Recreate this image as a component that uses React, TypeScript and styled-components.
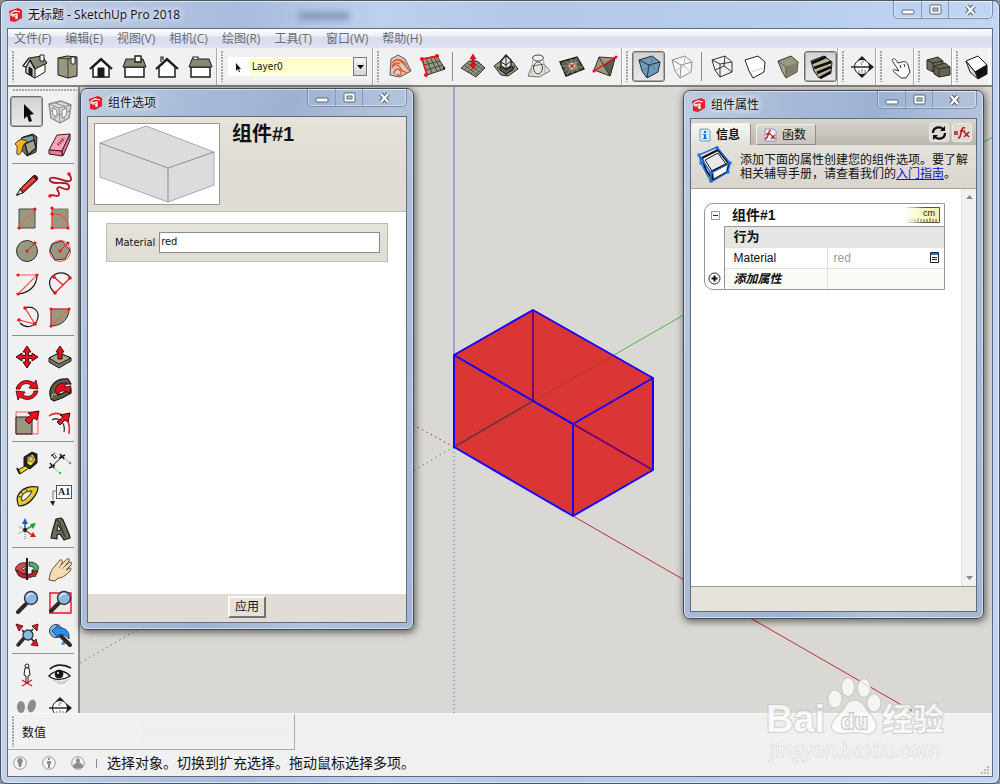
import React from "react";
import styled, { createGlobalStyle, css } from "styled-components";

const ui = `"Open Sans", "Noto Sans CJK SC", sans-serif`;
const tahoma = `"DejaVu Sans Condensed", "DejaVu Sans", "Noto Sans CJK SC", sans-serif`;
const arial = `"Liberation Sans", "Noto Sans CJK SC", sans-serif`;

const GlobalStyle = createGlobalStyle`
  * { box-sizing: border-box; }
  body { margin: 0; background: #8d9197; font-family: ${ui}; font-size: 12px; color: #111; }
  button, input, select { font: inherit; color: inherit; margin: 0; }
  svg { display: block; flex: none; }
`;

/* ---------- window chrome ---------- */

const AppWindow = styled.div`
  position: relative;
  display: flex;
  flex-direction: column;
  height: 100vh;
  padding: 0 6px 6px;
  border: 1px solid #4c5561;
  border-radius: 7px;
  background: linear-gradient(90deg, #c3d2e8 0, #b4c5e1 12%, #a8bbdc 24%, #bcd1ee 38%, #b3c8e6 52%, #b7cdec 75%, #c0d6f3 100%);
  box-shadow: inset 0 0 0 1px #dde8f6;
`;

const TitleBar = styled.header`
  position: relative;
  display: flex;
  align-items: center;
  flex: none;
  height: 27px;
  padding-left: 2px;
`;

const TitleText = styled.h1`
  flex: 1;
  margin: 0 0 0 6px;
  font-size: 12px;
  font-weight: 400;
  line-height: 18px;
  text-shadow: 0 0 6px #fff, 0 0 8px #fff;
`;

const GlassSmudge = styled.span`
  position: absolute;
  left: 292px;
  top: 11px;
  width: 50px;
  height: 8px;
  background: rgba(84, 104, 145, 0.5);
  filter: blur(3px);
`;

const Captions = styled.div`
  display: flex;
  align-self: flex-start;
  height: 18px;
  border: 1px solid #7f8fab;
  border-top: 0;
  border-radius: 0 0 5px 5px;
  box-shadow: inset 0 0 0 1px rgba(255, 255, 255, 0.4);
`;

const CaptionButton = styled.button<{ $wide?: boolean }>`
  display: flex;
  align-items: center;
  justify-content: center;
  width: ${(p) => (p.$wide ? 44 : 27)}px;
  padding: 0;
  border: 0;
  border-left: 1px solid #8c9bb5;
  background: none;
  &:first-child { border-left: 0; }
`;

const Client = styled.div`
  display: flex;
  flex: 1;
  flex-direction: column;
  min-height: 0;
  border: 1px solid #616b7b;
  background: #f0f0f0;
`;

const MenuBar = styled.nav`
  display: flex;
  align-items: center;
  gap: 14px;
  flex: none;
  height: 19px;
  padding: 0 6px;
  background: linear-gradient(#fdfdff 0, #eef0f8 35%, #d7dcee 45%, #dfe3f3 100%);
`;

const MenuItem = styled.button`
  padding: 0;
  border: 0;
  background: none;
  color: #6b6d72;
  line-height: 18px;
  white-space: nowrap;
`;

/* ---------- tool bars ---------- */

const ToolBar = styled.div`
  display: flex;
  flex: none;
  height: 39px;
  overflow: hidden;
  border-bottom: 2px solid #83847f;
  background: #f1f1f1;
`;

const ToolGroup = styled.div<{ $end?: number }>`
  display: flex;
  align-items: center;
  flex: none;
  padding-right: ${(p) => p.$end ?? 0}px;
  border-right: 1px solid #a9a9a9;
  box-shadow: 1px 0 0 #fff;
  &:last-child { border-right: 0; }
`;

const Grip = styled.span<{ $flat?: boolean }>`
  flex: none;
  ${(p) =>
    p.$flat
      ? css`
          width: 64px;
          height: 2px;
          margin: 2px 0 4px 3px;
          background: repeating-linear-gradient(90deg, #a8a8a8 0 2px, transparent 2px 3px);
        `
      : css`
          width: 2px;
          height: 31px;
          margin: 0 4px;
          background: repeating-linear-gradient(#a8a8a8 0 2px, transparent 2px 3px);
        `}
`;

const ToolButton = styled.button<{ $compact?: boolean }>`
  display: flex;
  align-items: center;
  justify-content: center;
  flex: none;
  width: ${(p) => (p.$compact ? 27 : 33)}px;
  height: 33px;
  padding: 0;
  border: 0;
  background: none;
  &[aria-pressed="true"] {
    height: 31px;
    margin: 1px 0;
    border: 1px solid #6f6f6f;
    border-radius: 3px;
    background: linear-gradient(#d2d2d2, #e9e9e9);
    box-shadow: inset 0 0 0 1px #a9a9a9;
  }
`;

const Divider = styled.span<{ $flat?: boolean }>`
  flex: none;
  background: #8e8e8e;
  ${(p) => (p.$flat ? "width: 62px; height: 1px; margin: 2px 2px 4px;" : "width: 1px; height: 29px; margin: 0 3px;")}
`;

const LayerBox = styled.label`
  display: flex;
  align-items: center;
  width: 140px;
  height: 19px;
  margin-left: 1px;
  background: #fff;
`;

const LayerSelect = styled.select`
  flex: 1;
  min-width: 0;
  height: 17px;
  padding: 0 0 0 2px;
  border: 0;
  appearance: none;
  background: #ffffcd;
  font-family: ${tahoma};
  font-size: 10px;
`;

const DropArrow = styled.span`
  display: flex;
  align-items: center;
  justify-content: center;
  width: 14px;
  height: 19px;
  margin: 0 1px;
  border: 1px solid #777;
  background: linear-gradient(#f6f6f6, #d5d5d5);
`;

const Workspace = styled.main`
  display: flex;
  flex: 1 1 0;
  min-height: 0;
`;

const ToolPalette = styled.aside`
  flex: none;
  width: 72px;
  overflow: hidden;
  padding: 0 0 0 2px;
  border-right: 2px solid #8b8c8a;
  background: #f1f1f1;
`;

const PaletteSection = styled.div`
  display: grid;
  grid-template-columns: 33px 33px;
`;

const Viewport = styled.section`
  position: relative;
  flex: 1;
  min-width: 0;
  background: #d9d8d4;
`;

const Scene = styled.svg`
  width: 100%;
  height: 100%;
  overflow: hidden;
`;

/* ---------- bottom bars ---------- */

const ValueRow = styled.div`
  flex: none;
  height: 37px;
  border-top: 1px solid #fafafa;
`;

const ValueBox = styled.label`
  display: flex;
  align-items: center;
  width: 287px;
  height: 36px;
  border-right: 1px solid #ababab;
  border-bottom: 1px solid #ababab;
  background: #f1f1f1;
`;

const ValueInput = styled.input`
  width: 148px;
  height: 14px;
  margin-left: 95px;
  border: 0;
  background: #efefef;
`;

const ValueLabel = styled.span`
  margin-left: 4px;
`;

const StatusBar = styled.footer`
  display: flex;
  align-items: center;
  gap: 15px;
  flex: none;
  height: 26px;
  padding-left: 5px;
  background: #f0f0f0;
`;

const StatusText = styled.p`
  margin: 0;
  padding-left: 10px;
  font-size: 14px;
  line-height: 20px;
`;

const StatusTick = styled.span`
  width: 1px;
  height: 9px;
  margin: 0 -15px 0 -4px;
  background: #8a8a8a;
`;

const Watermark = styled.svg`
  position: absolute;
  right: 46px;
  bottom: 12px;
  pointer-events: none;
`;

const ResizeCorner = styled.svg`
  position: absolute;
  right: 9px;
  bottom: 8px;
`;

/* ---------- floating dialogs ---------- */

const Dialog = styled.section<{ $place: string }>`
  position: absolute;
  ${(p) => p.$place}
  display: flex;
  flex-direction: column;
  padding: 0 6px 6px;
  border: 1px solid #434c58;
  border-radius: 7px;
  background: linear-gradient(100deg, #bfcde1 0, #a8bbd8 25%, #9db2d3 50%, #b3c3dc 75%, #a3b6d3 100%);
  box-shadow: inset 0 0 0 1px #d3deed, 1px 2px 7px 1px rgba(0, 0, 0, 0.5);
`;

const DialogBody = styled(Client)`
  background: #fff;
`;

const OptionsHeader = styled.div`
  display: flex;
  gap: 12px;
  flex: none;
  height: 95px;
  padding: 6px;
  border-bottom: 1px solid #bdb9b5;
  background: linear-gradient(#e5e4d9, #e1dcd6 45%);
`;

const Thumb = styled.div`
  width: 126px;
  height: 82px;
  border: 1px solid #999;
  background: #fff;
`;

const OptionsTitle = styled.h2`
  margin: 0;
  font-family: ${arial};
  font-size: 20px;
  line-height: 22px;
`;

const OptionsContent = styled.div`
  flex: 1;
  padding: 11px 18px;
`;

const Field = styled.label`
  display: flex;
  align-items: center;
  gap: 4px;
  height: 39px;
  padding: 0 7px 0 8px;
  border: 1px solid #bdbdbd;
  background: linear-gradient(#e4e3d9, #e1dcd6);
  font-family: ${tahoma};
  font-size: 11px;
`;

const FieldInput = styled.input`
  flex: 1;
  min-width: 0;
  height: 21px;
  padding: 0 0 3px 1px;
  border: 1px solid #8b8b8b;
  background: #fff;
`;

const OptionsFooter = styled.div`
  display: flex;
  justify-content: center;
  flex: none;
  height: 28px;
  padding-top: 2px;
  background: #e1dcd6;
`;

const ApplyButton = styled.button`
  width: 38px;
  height: 22px;
  padding: 0;
  border: 2px solid;
  border-color: #f8f8f8 #77746f #77746f #f8f8f8;
  background: #e4e2dc;
  font-size: 12px;
  line-height: 16px;
`;

const TabStrip = styled.div`
  display: flex;
  align-items: flex-end;
  gap: 5px;
  flex: none;
  height: 26px;
  padding: 0 4px 0 0;
  background: linear-gradient(#d9d5cf, #bcb7b0);
`;

const Tab = styled.button`
  display: flex;
  align-items: center;
  gap: 5px;
  width: 60px;
  height: 21px;
  padding: 0 0 0 7px;
  border: 1px solid #f1efeb;
  border-right-color: #8f8b85;
  border-bottom: 1px solid #8f8b85;
  border-radius: 3px 3px 0 0;
  background: linear-gradient(#dcd9d3, #c9c5be);
  font-size: 12px;
  line-height: 18px;
  white-space: nowrap;
  &[aria-selected="true"] {
    height: 22px;
    border-bottom: 0;
    background: linear-gradient(#f8f7f4, #e4e1db);
    font-weight: 700;
  }
`;

const TabTools = styled.div`
  display: flex;
  gap: 3px;
  flex: 1;
  justify-content: flex-end;
  padding-bottom: 3px;
`;

const TabTool = styled.button`
  display: flex;
  align-items: center;
  justify-content: center;
  width: 20px;
  height: 19px;
  padding: 0;
  border: 1px solid #eceae5;
  border-radius: 3px;
  background: #dedbd5;
`;

const Hint = styled.div`
  display: flex;
  gap: 7px;
  flex: none;
  height: 44px;
  padding: 1px 0 0 6px;
  border-bottom: 1px solid #a8a49e;
  background: linear-gradient(#e4e1db, #dad6cf);
`;

const HintText = styled.p`
  margin: 0;
  padding-top: 7px;
  font-family: ${arial};
  line-height: 14px;
  white-space: nowrap;
`;

const HintLink = styled.a`
  color: #1212d8;
`;

const Scroller = styled.div`
  display: flex;
  flex: 1;
  min-height: 0;
`;

const ScrollContent = styled.div`
  flex: 1;
  padding: 14px 16px 0 13px;
`;

const ScrollTrack = styled.div`
  display: flex;
  flex-direction: column;
  justify-content: space-between;
  align-items: center;
  width: 15px;
  padding: 6px 0;
  border-left: 1px solid #e2e2e2;
  background: #f1f1f1;
`;

const AttributesFooter = styled.div`
  flex: none;
  height: 25px;
  border-top: 1px solid #999;
  background: #e4e2da;
`;

const AttributeFrame = styled.div`
  overflow: hidden;
  border: 1px solid #979797;
  border-radius: 9px 0 0 9px;
`;

const AttributeTable = styled.table`
  width: 100%;
  border-collapse: collapse;
  table-layout: fixed;
  font-family: ${arial};
  font-size: 12px;
  line-height: 16px;
`;

const Cell = styled.td<{ $line?: boolean; $tint?: string }>`
  height: 21px;
  padding: 0 0 0 ${(p) => (p.$line ? 6 : 9)}px;
  border-top: 1px solid #e0e0e0;
  ${(p) => p.$line && "border-left: 1px solid #e0e0e0;"}
  background: ${(p) => p.$tint ?? "#fff"};
  text-align: left;
  font-weight: 400;
`;

const SectionCell = styled(Cell)`
  border-top: 1px solid #979797;
  font-size: 13px;
  font-weight: 700;
`;

const GutterCell = styled.td`
  padding: 0 0 0 3px;
  border-right: 1px solid #979797;
  vertical-align: bottom;
`;

const NameCell = styled.th`
  height: 22px;
  padding: 0 3px 0 8px;
  text-align: left;
`;

const NameLine = styled.div`
  display: flex;
  align-items: center;
  justify-content: space-between;
  font-size: 14px;
`;

const ToggleCell = styled.td`
  padding: 0 0 0 6px;
`;

const PlainButton = styled.button`
  display: block;
  padding: 0;
  border: 0;
  background: none;
`;

const ValueLine = styled.div`
  display: flex;
  align-items: center;
  justify-content: space-between;
  padding-right: 5px;
  color: #9b9b9b;
`;

const AddButton = styled(PlainButton)`
  font-style: italic;
  font-weight: 700;
  font-size: 12px;
`;

/* ---------- icons ---------- */

const R = "#f2101c";
const K = "#1c1c1c";
const O = "#9a9781";
const D = "#5f5d4e";

const Dots = ({ at, r = 1.6 }: { at: number[][]; r?: number }) => (
  <g fill={R} stroke="none">
    {at.map(([x, y]) => (
      <circle key={`${x}-${y}`} cx={x} cy={y} r={r} />
    ))}
  </g>
);

const icons: Record<string, React.ReactNode> = {
  iso: (
    <g stroke={K} strokeLinejoin="round">
      <path d="M4 12v7l9 5 10-6v-8l-9 4z" fill="#fff" />
      <path d="M13 15v9l-9-5v-7l4-6z" fill="#c9c9c2" />
      <path d="M7 4l13-2 5 7-12 6z" fill="#8a8873" />
      <path d="M7 4L1 12l3 1 4-7 5 9" fill="#fff" strokeWidth="1.3" />
      <path d="M7 13l3 2v7l-3-2z" fill={K} />
      <path d="M18 1h4v6h-4z" fill="#fff" />
    </g>
  ),
  top: (
    <g stroke={K} strokeLinejoin="round">
      <path d="M3 4l9-2 10 1v19l-9 2-10-3z" fill={O} />
      <path d="M13 4v20M3 4l10 1 9-2" fill="none" stroke="#3d3c33" />
      <rect x="16" y="3" width="4" height="7" rx="1" fill="#fff" />
    </g>
  ),
  front: (
    <g stroke={K}>
      <path d="M5 13v10h16V13l-8-7z" fill="#fff" strokeWidth="1.5" />
      <path d="M2 15L13 5l11 10" fill="none" strokeWidth="2.2" />
      <path d="M10 14h6v9h-6z" fill={K} />
    </g>
  ),
  right: (
    <g stroke={K}>
      <path d="M4 13h19v10H4z" fill="#fff" strokeWidth="1.5" />
      <path d="M5 5h17l3 8H2z" fill="#8a8873" />
      <path d="M14 2h6v6h-6z" fill="#fff" strokeWidth="1.4" />
    </g>
  ),
  back: (
    <g stroke={K}>
      <path d="M5 13v10h16V13l-8-7z" fill="#fff" strokeWidth="1.5" />
      <path d="M2 15L13 5l11 10" fill="none" strokeWidth="2.2" />
      <path d="M7 8V3h2v3" fill="#fff" strokeWidth="1.2" />
    </g>
  ),
  left: (
    <g stroke={K}>
      <path d="M4 13h19v10H4z" fill="#fff" strokeWidth="1.5" />
      <path d="M5 5h17l3 8H2z" fill="#8a8873" />
      <path d="M6 5V3h5v2" fill="#fff" strokeWidth="1.2" />
    </g>
  ),
  contours: (
    <g fill="none">
      <path d="M4 5l7-4 7 4 6 12-11 6-10-2z" fill="#d2cec0" stroke="#555" />
      <path
        d="M5 9c4-5 8-3 12 1s3 5 6 7M5 14c3-6 8-2 9 1s5 2 6 5M7 20c0-5 5-7 7-2 1 3-3 5-4 2M8 6c5-2 9 2 11 5M5 12c2-3 5-4 8-2"
        stroke="#ea5a35"
        strokeWidth="1.4"
      />
    </g>
  ),
  scratch: (
    <g fill="none">
      <path d="M2 5l15-3 8 13-18 6z" fill={O} stroke="#333" />
      <path d="M6 4l6 15M10 3l7 14M14 3l7 13M4 11l16-4M6 16l17-5" stroke="#333" strokeWidth=".8" />
      <path d="M7 21L2 5l15-3" stroke={R} strokeWidth="1.5" />
      <Dots at={[[2, 5], [17, 2], [6, 21]]} r={2} />
      <circle cx="24" cy="14" r="1.2" fill={K} />
    </g>
  ),
  smoove: (
    <g fill="none">
      <path d="M1 14l8-7 8 0 8 7-9 9z" fill={O} stroke="#333" />
      <path d="M4 11l14 10M7 9l13 9M10 7l12 8M20 8L8 18M22 10l-11 9M17 7L5 15M24 13L14 22" stroke="#444" strokeWidth=".7" />
      <path d="M13 0l3 5h-2v5h2l-3 5-3-5h2V5h-2z" fill={R} stroke="#8d0008" strokeWidth=".5" />
    </g>
  ),
  stamp: (
    <g stroke="#222" strokeLinejoin="round">
      <path d="M1 12l9-7 9 2 6 8-10 7-7-1z" fill={O} />
      <path d="M8 7l5-6 5 5v6l-5 3-5-3z" fill="#e5e5e0" strokeWidth="1.4" />
      <path d="M7 12l6 4 7-4v4l-7 4-6-4zM4 13l10 8M22 13l-9 7" fill={D} />
      <path d="M13 2v14M8 8l5 3 5-4" fill="none" />
    </g>
  ),
  drape: (
    <g stroke="#6f6f66" fill="none">
      <path d="M6 12l12-2 6 7-11 6-11-1z" fill="#e6e6de" />
      <ellipse cx="12" cy="4" rx="5.5" ry="3" stroke="#444" />
      <path d="M7 4c0 7-4 13 0 17M17 4c0 5 4 9 1 15" stroke="#aaa" />
      <ellipse cx="12" cy="14" rx="4.5" ry="6" stroke="#444" />
    </g>
  ),
  detail: (
    <g fill="none">
      <path d="M1 8l17-5 7 12-18 7z" fill={D} stroke={K} strokeWidth="1.4" />
      <path d="M6 7l14 11M18 4L8 21M2 12l22 1M12 5l2 15M4 18L20 7" stroke="#a5a28d" strokeWidth=".7" />
      <path d="M9 9l8-1 2 7-8 2z" fill="#8e8b77" />
      <path d="M10 12h6M13 9v6" stroke="#fff" strokeWidth="1.4" />
      <circle cx="13" cy="12" r="1.8" fill={R} />
    </g>
  ),
  flip: (
    <g>
      <path d="M7 3l16 1-5 18L2 16z" fill={O} stroke="#333" />
      <path d="M23 4l-5 18-6-10z" fill={D} stroke="#333" />
      <path d="M7 3l5 9" stroke="#333" />
      <path d="M2 17L24 3" stroke={R} strokeWidth="1.4" />
      <Dots at={[[2, 17], [24, 3]]} r={1.6} />
    </g>
  ),
  xray: (
    <g stroke="#1f2e3a" strokeLinejoin="round">
      <path d="M3 6l13-4 8 6-2 10-11 6-5-7z" fill="#6f9bb9" />
      <path d="M3 6l10 5 11-3M13 11l-2 13" fill="none" />
      <path d="M16 2v10l6 6M16 12L6 17" fill="none" stroke="#4f7690" strokeWidth=".8" />
    </g>
  ),
  backedges: (
    <g stroke="#8d8d8d" strokeLinejoin="round" fill="#f8f8f8">
      <path d="M3 6l13-4 7 6-1 10-11 6-5-7z" />
      <path d="M3 6l9 5 11-3M12 11l-1 13" fill="none" />
      <path d="M16 2l-1 10 7 6M15 12l-9 5" fill="none" stroke="#bbb" />
    </g>
  ),
  wire: (
    <g stroke="#333" fill="none" strokeLinejoin="round">
      <path d="M3 6l13-4 7 6v10l-12 5-5-7zM3 6l8 4 12-2M11 10v13M16 2l-1 10 8 6M15 12l-9 4" />
    </g>
  ),
  hidden: (
    <g stroke="#222" strokeLinejoin="round">
      <path d="M3 6l13-4 7 6-1 10-11 6-4-7z" fill="#fff" />
      <path d="M9 18l12-4" stroke="#ccc" />
    </g>
  ),
  shaded: (
    <g stroke="#3c3b33" strokeLinejoin="round">
      <path d="M3 7l13-5 7 6-1 10-11 6-4-7z" fill={O} />
      <path d="M11 13l12-5-1 10-11 6z" fill="#827f6b" stroke="none" />
      <path d="M3 7l8 6v11l-4-7z" fill="#a5a28b" strokeWidth=".6" />
    </g>
  ),
  textured: (
    <g stroke={K} strokeLinejoin="round">
      <path d="M3 7l13-5 8 6-1 10-12 6-5-7z" fill="#b8b49a" />
      <path d="M4 9l14-6M6 14l17-6M9 19l14-6M12 24l11-6" stroke="#0c0c0c" strokeWidth="2.8" />
    </g>
  ),
  section: (
    <g fill="none" stroke={K}>
      <circle cx="13" cy="13" r="7.5" fill="#fff" />
      <path d="M2 13h22" strokeWidth="1.4" />
      <path d="M13 2l4 4H9zM25 13l-5-4v8zM13 24l-4-4h8z" fill={K} stroke="none" />
      <path d="M15 8c-3-1-4 2-2 3M10 16v3M13 15v4M16 16v3" stroke="#777" />
    </g>
  ),
  hand: (
    <g>
      <path
        d="M6 5c2-1 3 1 5 4l4-1c3-1 5 0 6 3l2 7-4 6h-5l-7-6c-2-2 0-3 2-2l3 1L6 8c-1-1-1-2 0-3z"
        fill="#fff"
        stroke="#333"
      />
      <path d="M13 11l1 3M17 10l1 3" stroke="#333" />
    </g>
  ),
  solids: (
    <g stroke="#2c2b25" strokeLinejoin="round">
      <path d="M2 6l11-3 5 4v9l-10 2-6-3z" fill="#6f6c5a" />
      <path d="M9 12l11-3 5 4v8l-11 2-5-3z" fill="#67644f" />
      <path d="M2 6l6 3v9M8 9l10-2M9 12l5 3v8M14 15l11-2" fill="none" />
    </g>
  ),
  halfbox: (
    <g stroke={K} strokeLinejoin="round">
      <path d="M3 7l12-5 9 9-12 7z" fill="#fff" />
      <path d="M12 18l12-7v9l-9 5z" fill="#111" />
      <path d="M3 7l9 11 3 7-8-7z" fill="#ddd" />
    </g>
  ),
  arrow: <path d="M10 5v15l3-3 2 6 3-1-2-6 4-1z" fill="#0b0b0b" />,
  component: (
    <g fill="none" stroke="#8b8b8b" strokeLinejoin="round">
      <path d="M2 5l12-3 10 4-2 13-9 5-9-5z" fill="#dcdcdc" strokeWidth="1.4" />
      <path d="M2 5l10 4 12-3M12 9l1 15M4 12l9 4 10-4M7 7l1 14M18 7l-1 14M8 4l9 3" />
      <path d="M15 11l5-2-1 8-4 2zM5 9l5 2v7l-4-2z" fill="#f5f5f5" />
    </g>
  ),
  paint: (
    <g stroke={K} strokeLinejoin="round">
      <path d="M9 5l10-3 4 3-1 15-9 4-8-9z" fill="#6f6c59" />
      <path d="M7 6l12-3 1 5-9 4z" fill="#7fa0a4" />
      <path d="M11 12l9-4 2 8-8 7z" fill="#a8a48c" strokeWidth="1.3" />
      <path d="M1 12c4-6 9-5 13-2-4 1-5 3-6 8-1 4-4 6-5 4-1-3 2-7-2-10z" fill="#f0b51e" strokeWidth=".8" />
    </g>
  ),
  eraser: (
    <g stroke="#3d1c25" strokeLinejoin="round">
      <path d="M10 3l13-1-8 17L2 18z" fill="#f6a6b6" />
      <path d="M23 2v6l-7 16-1-5zM2 18v4l13 2v-5z" fill="#e57f96" />
      <path d="M11 13l6-7" stroke="#7d3145" strokeWidth="3" strokeDasharray="1.2 1" />
    </g>
  ),
  pencil: (
    <g strokeLinejoin="round">
      <path d="M6 17L19 4l4 4-14 13z" fill="#c9281e" stroke={K} />
      <path d="M19 4c2-2 6 1 4 4z" fill="#5c1511" stroke={K} />
      <path d="M3 23l3-6 3 4z" fill="#e8d7ac" stroke={K} />
      <path d="M2 24l1-3 2 2z" fill={K} />
      <path d="M9 17L20 7" stroke="#ef6a5b" strokeWidth="1.2" />
    </g>
  ),
  freehand: (
    <g fill="none">
      <path
        d="M22 2c4 6 2 8-3 7S7 4 4 6s0 5 5 5 12-1 13 3-3 4-7 2-6 0-4 3 1 5-1 5-4-2-8 0"
        stroke="#b31323"
        strokeWidth="1.8"
      />
      <Dots at={[[22, 2], [3, 24]]} r={1.8} />
    </g>
  ),
  rect: (
    <g>
      <path d="M5 4h16v19H5z" fill={O} stroke="#4b4a40" />
      <path d="M5 23L21 4" stroke="#ff5a5a" />
      <Dots at={[[5, 23], [21, 4]]} />
    </g>
  ),
  rotrect: (
    <g fill="none">
      <path d="M5 4h16v19H5z" fill={O} stroke="#77756a" />
      <path d="M5 4v19h16v-4C19 12 13 8 5 9" stroke="#ff4d4d" strokeWidth="1.2" />
      <Dots at={[[5, 3], [5, 9], [5, 23], [21, 23]]} />
    </g>
  ),
  circle: (
    <g>
      <circle cx="13" cy="13" r="10.5" fill={O} stroke="#33322b" />
      <path d="M13 13l8-8" stroke={R} />
      <Dots at={[[13, 13], [21, 5]]} />
    </g>
  ),
  polygon: (
    <g>
      <circle cx="13" cy="13" r="10.5" fill="#f6d9d5" stroke="#ff4d4d" />
      <path d="M15 3l8 9-5 9-10 1-5-9 2-7z" fill={O} stroke="#33322b" />
      <path d="M13 13l7-7" stroke={R} />
      <Dots at={[[13, 13], [21, 5]]} />
    </g>
  ),
  arc: (
    <g fill="none">
      <path d="M23 4c0 11-8 18-19 19" stroke={K} strokeWidth="1.2" />
      <path d="M4 4h19L4 23" stroke="#ff5a5a" strokeWidth="1.2" />
      <Dots at={[[4, 4], [23, 4], [4, 23]]} />
    </g>
  ),
  arc2: (
    <g fill="none">
      <path d="M8 22C1 16 1 8 7 4s14-2 16 3" stroke={K} strokeWidth="1.2" />
      <path d="M8 22L23 7M7 6l9 8" stroke={R} strokeWidth="1.2" />
      <Dots at={[[8, 22], [23, 7], [7, 6]]} r={1.8} />
    </g>
  ),
  arc3: (
    <g fill="none">
      <path d="M11 4c8-3 14 3 13 9-1 9-11 13-18 6" stroke={K} strokeWidth="1.2" />
      <path d="M11 4l10 16-16-4" stroke="#f33" strokeWidth="1.2" />
      <Dots at={[[11, 4], [21, 20], [5, 16]]} r={1.8} />
    </g>
  ),
  pie: (
    <g>
      <path d="M4 5h18c0 10-7 17-18 17z" fill={O} stroke="#33322b" />
      <path d="M22 5L4 22V5z" fill="none" stroke="#ff4d4d" />
      <Dots at={[[4, 5], [22, 5], [4, 22]]} />
    </g>
  ),
  move: (
    <path
      d="M13 2l4 6h-2.500v3.500H18V9l6 4-6 4v-2.500h-3.500V18H17l-4 6-4-6h2.500v-3.500H8V17l-6-4 6-4v2.500h3.500V8H9z"
      fill={R}
      stroke="#3a0508"
    />
  ),
  pushpull: (
    <g strokeLinejoin="round">
      <path d="M2 14l10-5 12 5v3l-12 7-10-6z" fill="#77745f" stroke={K} />
      <path d="M2 14l10-5 12 5-12 6z" fill="#aaa78f" stroke={K} />
      <path d="M13 2l4 6h-2v7h-4V8H9z" fill={R} stroke="#3a0508" />
    </g>
  ),
  rotate: (
    <g fill={R} stroke="#3a0508" strokeWidth=".8" strokeLinejoin="round">
      <path d="M2 12C4 4 13 1 20 6l2-3 2 9-9-1 2-3C12 5 7 7 6 12z" />
      <path d="M24 14c-2 8-11 11-18 6l-2 3-2-9 9 1-2 3c5 3 10 1 11-4z" />
    </g>
  ),
  followme: (
    <g strokeLinejoin="round">
      <path d="M4 22C0 10 8 1 21 2l3 5C15 6 9 11 10 18l4-1 10-5v4l-9 5-8 3z" fill="#5e5b4a" stroke={K} strokeWidth="1.3" />
      <path d="M9 16C7 9 12 5 20 6l-3 4 7-1-1 7-6-2c-4 0-5 1-5 4z" fill="#d9121c" stroke="#3a0508" strokeWidth=".8" />
      <path d="M4 21l2-4 4 1" fill="none" stroke="#bdb9a0" />
    </g>
  ),
  scale: (
    <g>
      <path d="M2 2h22v22H2z" fill="#fbeaea" stroke="#ff5a5a" />
      <path d="M2 7h16v17H2z" fill={O} stroke={K} />
      <path d="M25 1l-2 9-3-2-5 6-4-4 6-5-3-2z" fill={R} stroke="#3a0508" />
    </g>
  ),
  offset: (
    <g fill="none">
      <path d="M2 6C10-1 25 6 22 24" stroke="#f22" strokeWidth="1.6" />
      <path d="M5 10c6-4 14 3 12 12" stroke="#333" strokeWidth="1.3" />
      <path d="M23 3l-2 9-3-2-5 5-3-3 6-5-3-2z" fill={R} stroke="#3a0508" />
    </g>
  ),
  tape: (
    <g strokeLinejoin="round">
      <path d="M10 7l8-5 5 2v9l-7 6-6-3z" fill="#26251d" stroke={K} />
      <path d="M13 7l6-3 3 6-5 6-4-2z" fill="#ffe11a" stroke={K} />
      <circle cx="17" cy="9" r="2.5" fill="#c7c7c7" stroke={K} strokeWidth=".6" />
      <path d="M4 20l7-4 4 2-9 6z" fill="#f2d414" stroke={K} />
      <path d="M3 18l3 6" stroke={K} strokeWidth="2" />
    </g>
  ),
  dimension: (
    <g stroke={K} fill="none">
      <path d="M15 7L5 16" />
      <path d="M15 6l8 7M5 16l8 7" stroke="#888" strokeDasharray="2 1" />
      <path d="M13 4l4 5M12 8l6-3M3 13l4 5M2 18l6-3" strokeWidth="1.5" />
      <path d="M4 6l4-3M5 4l2 4c2 1 3-1 1-3" />
      <g fill="#38c838" stroke="none">
        <circle cx="23" cy="13" r="1.3" />
        <circle cx="13" cy="23" r="1.3" />
      </g>
    </g>
  ),
  protractor: (
    <g strokeLinejoin="round">
      <path d="M5 23C-1 12 9 2 24 4c0 6-8 19-19 19z" fill="#e5c72f" stroke={K} strokeWidth="1.2" />
      <path d="M8 18c-2-6 3-10 10-10-2 4-6 9-10 10z" fill="#f1f1f1" stroke={K} />
      <path d="M4 13l3 1M7 9l2 2M12 6l1 2" stroke={K} strokeWidth=".8" />
    </g>
  ),
  text: (
    <g>
      <path d="M9 8H6v9" fill="none" stroke="#777" />
      <path d="M3 18h5l-2 5z" fill={K} />
      <rect x="9.5" y="2.5" width="15" height="13" fill="#fff" stroke="#555" />
      <text x="11" y="12" fontFamily="Liberation Serif, serif" fontSize="10" fontWeight="700" fill="#222">
        A1
      </text>
    </g>
  ),
  axes: (
    <g strokeWidth="1.5">
      <path d="M11 14V6" stroke="#1f5da8" />
      <path d="M11 2l3 6H8z" fill="#1f5da8" />
      <path d="M11 14l7-4" stroke="#1f9d3c" />
      <path d="M22 7l-3 6-3-5z" fill="#1f9d3c" />
      <path d="M11 14l7 5" stroke="#d42020" />
      <path d="M22 21h-6l3-5z" fill="#d42020" />
      <path d="M11 14l-7-4" stroke="#e08080" strokeDasharray="1 1" />
      <path d="M11 14l-7 4" stroke="#7dc37d" strokeDasharray="1 1" />
      <path d="M11 14v9" stroke="#7c9ccc" strokeDasharray="1 1" />
      <circle cx="11" cy="14" r="2" fill={K} />
    </g>
  ),
  text3d: (
    <g stroke={K} strokeLinejoin="round">
      <path d="M9 3l5-1 2 2 6 14 1 4-6 2-4-6-3 1v4l-6-1 1-5z" fill="#6c6a5b" strokeWidth="1.2" />
      <path d="M11 9l3 5-4 1z" fill="#f1f1f1" />
      <path d="M9 3l3 3 6 15" fill="none" stroke="#3b3a31" strokeWidth="1.5" />
    </g>
  ),
  orbit: (
    <g strokeLinejoin="round">
      <path d="M11 18c-7 1-11-3-9-7s8-5 10-4v4c-4 0-5 2-3 3l3-2v6z" fill="#cf4a4a" stroke={K} strokeWidth=".8" />
      <path d="M15 6c7 0 11 4 9 8l-6 4v-4c3-1 3-3-3-4z" fill="#4fae6b" stroke={K} strokeWidth=".8" />
      <path d="M2 14l3 1c4 4 9 4 14 2l-1-2h6l-3 6-1-1c-6 3-12 3-16-1z" fill="#c3202b" stroke={K} strokeWidth=".8" />
      <path d="M13 2v22" stroke={K} strokeWidth="2" />
    </g>
  ),
  pan: (
    <g>
      <path
        d="M2 24c1-8 3-11 6-14l5-6c2-1 3 1 2 3l-1 2 6-6c2-1 3 0 2 2l-4 5 5-4c2 0 2 1 1 3l-5 5 4-2c2 0 1 2-1 4-4 4-7 6-11 6l-3 3z"
        fill="#f4dcb8"
        stroke="#6b5030"
      />
      <path d="M14 9l-2 3M18 10l-3 3" stroke="#a5845a" />
    </g>
  ),
  zoom: (
    <g>
      <path d="M4 23l8-8" stroke="#2b2b2b" strokeWidth="4" strokeLinecap="round" />
      <circle cx="17" cy="9" r="6.5" fill="#8fb8dd" stroke="#2b3a48" strokeWidth="1.4" />
      <path d="M13 8c1-3 4-4 6-3" stroke="#dcebf8" fill="none" strokeWidth="1.5" />
    </g>
  ),
  zoomwin: (
    <g>
      <path d="M3 4h21v20H3z" fill="#f8e6e6" stroke={R} strokeWidth="1.4" />
      <path d="M4 22l8-8" stroke="#2b2b2b" strokeWidth="4" strokeLinecap="round" />
      <circle cx="17" cy="9" r="6.5" fill="#8fb8dd" stroke="#2b3a48" strokeWidth="1.4" />
      <path d="M13 8c1-3 4-4 6-3" stroke="#dcebf8" fill="none" strokeWidth="1.5" />
    </g>
  ),
  extents: (
    <g>
      <path d="M4 23l7-8" stroke="#2b2b2b" strokeWidth="3.5" strokeLinecap="round" />
      <path d="M8 8l3 3M19 7l-4 4M17 16l3 4" stroke={K} strokeWidth="1.5" />
      <path d="M2 2l7 2-4 5zM24 2l-1 7-5-5zM24 24l-7-1 5-6z" fill={R} stroke="#3a0508" strokeWidth=".8" />
      <circle cx="14" cy="13" r="5" fill="#8fb8dd" stroke="#2b3a48" strokeWidth="1.3" />
    </g>
  ),
  previous: (
    <g strokeLinejoin="round">
      <circle cx="9" cy="9" r="6.5" fill="#8fb8dd" stroke="#2b3a48" />
      <path d="M14 22l2-3 3 1c-1 3-3 4-5 2z" fill="#2c8ee8" />
      <path d="M14 14l9 9" stroke="#2b2b2b" strokeWidth="4" strokeLinecap="round" />
      <path d="M5 9l6-6v3c7-1 12 3 11 11-3-4-6-5-11-4v3z" fill="#2c8ee8" stroke="#123a66" strokeWidth=".8" />
    </g>
  ),
  camera: (
    <g fill="#fff" stroke={K}>
      <path d="M8 24l10-6M8 18l10 6" stroke={R} strokeWidth="1.2" />
      <circle cx="13" cy="4" r="2" />
      <path d="M11 6h4l1 7-2 1v7h-2v-7l-2-1z" />
    </g>
  ),
  look: (
    <g fill="none" stroke={K}>
      <path d="M3 7c5-5 14-5 21-1" strokeWidth="1.8" />
      <path d="M2 14c5-6 14-7 21 0-6 4-15 5-21 0z" fill="#fff" strokeWidth="1.5" />
      <circle cx="12" cy="12" r="4" fill="#151515" />
      <circle cx="11" cy="11" r="1" fill="#fff" stroke="none" />
      <path d="M6 18c5 3 11 3 16-1M10 21c3 1 6 1 9-1" stroke="#bbb" />
    </g>
  ),
  walk: (
    <g fill="#8b8b8b">
      <ellipse cx="7" cy="12" rx="4" ry="6" />
      <ellipse cx="18" cy="11" rx="4" ry="6.5" transform="rotate(15 18 10)" />
      <path d="M5 19h5v4H5zM14 18h5v4h-5z" />
    </g>
  ),
};

const Icon = ({ name }: { name: string }) => (
  <svg width="26" height="26" viewBox="0 0 26 26" aria-hidden="true">
    {icons[name]}
  </svg>
);

const Logo = () => (
  <svg width="13" height="14" viewBox="0 0 13 14" aria-hidden="true">
    <path d="M0 3l9-3 4 2v8l-7 4-5-1V8z" fill="#e4202a" />
    <path d="M2 5l4-2 5 1M3 8h4v3M2 5v2l6-1v5" fill="none" stroke="#fff" strokeWidth="1.2" />
  </svg>
);

const WindowButtons = () => (
  <Captions>
    <CaptionButton aria-label="最小化">
      <svg width="14" height="12" viewBox="0 0 14 12">
        <rect x="1" y="6" width="12" height="4" rx="1" fill="#fff" stroke="#5c6779" />
      </svg>
    </CaptionButton>
    <CaptionButton aria-label="最大化">
      <svg width="13" height="12" viewBox="0 0 13 12">
        <rect x="1" y="1" width="11" height="9" rx="1" fill="#fff" stroke="#5c6779" />
        <rect x="4" y="4" width="5" height="3" fill="#b6c6df" stroke="#5c6779" />
      </svg>
    </CaptionButton>
    <CaptionButton aria-label="关闭" $wide>
      <svg width="13" height="12" viewBox="0 0 13 12">
        <path d="M3 2l7 8M10 2L3 10" stroke="#5c6779" strokeWidth="4.5" />
        <path d="M3 2l7 8M10 2L3 10" stroke="#fff" strokeWidth="2.3" />
      </svg>
    </CaptionButton>
  </Captions>
);

const Tool = ({ name, pressed, compact }: { name: string; pressed?: boolean; compact?: boolean }) => (
  <ToolButton aria-label={name} aria-pressed={pressed ? true : undefined} $compact={compact}>
    <Icon name={name} />
  </ToolButton>
);

const menus = ["文件(F)", "编辑(E)", "视图(V)", "相机(C)", "绘图(R)", "工具(T)", "窗口(W)", "帮助(H)"];

const palette = [
  ["arrow", "component", "paint", "eraser"],
  ["pencil", "freehand", "rect", "rotrect", "circle", "polygon", "arc", "arc2", "arc3", "pie"],
  ["move", "pushpull", "rotate", "followme", "scale", "offset"],
  ["tape", "dimension", "protractor", "text", "axes", "text3d"],
  ["orbit", "pan", "zoom", "zoomwin", "extents", "previous"],
  ["camera", "look", "walk", "section"],
];

const Model = () => (
  <Scene aria-label="模型">
    <g fill="none">
      <path d="M374 0v268" stroke="#a3a1cf" strokeWidth="2" />
      <path d="M374 361v300" stroke="#9b99c8" strokeDasharray="1 3" strokeWidth="2" />
      <path d="M374 360L0 576" stroke="#2fae2f" strokeDasharray="1.5 3.5" />
      <path d="M374 360L330 336" stroke="#d02020" strokeDasharray="1.5 3.5" />
      <path d="M534 268l80-46 330-190" stroke="#4dbb4d" />
      <path d="M493 429l339 195" stroke="#c62d2d" />
      <path d="M374 268l79-45 120 68v92l-80 46-119-69z" fill="#db3636" />
      <path d="M453 314l81-46" stroke="#b53a12" />
      <path d="M374 360l79-46" stroke="#743638" strokeWidth="2" />
      <path d="M453 223v91l120 69" stroke="#74006f" strokeWidth="2" />
      <path d="M374 268l79-45 120 68v92l-80 46-119-69zM374 268l119 69 80-46M493 337v92" stroke="#1600ff" strokeWidth="2" strokeLinejoin="round" />
    </g>
  </Scene>
);

const OptionsDialog = () => (
  <Dialog $place="left: 0; top: 1px; width: 334px; height: 542px;" aria-label="组件选项">
    <TitleBar>
      <Logo />
      <TitleText as="h2">组件选项</TitleText>
      <WindowButtons />
    </TitleBar>
    <DialogBody>
      <OptionsHeader>
        <Thumb>
          <svg width="124" height="80" viewBox="0 0 124 80" aria-hidden="true">
            <path d="M5 19L51 2l68 26v33L73 78 5 53z" fill="#dcdcdc" stroke="#a9a9a9" />
            <path d="M5 19l68 25 46-16M73 44v34" fill="none" stroke="#8f8f8f" />
          </svg>
        </Thumb>
        <OptionsTitle>组件#1</OptionsTitle>
      </OptionsHeader>
      <OptionsContent>
        <Field>
          Material
          <FieldInput defaultValue="red" />
        </Field>
      </OptionsContent>
      <OptionsFooter>
        <ApplyButton>应用</ApplyButton>
      </OptionsFooter>
    </DialogBody>
  </Dialog>
);

const AttributesDialog = () => (
  <Dialog $place="right: 8px; top: 3px; width: 301px; height: 529px;" aria-label="组件属性">
    <TitleBar>
      <Logo />
      <TitleText as="h2">组件属性</TitleText>
      <WindowButtons />
    </TitleBar>
    <DialogBody>
      <TabStrip role="tablist">
        <Tab role="tab" aria-selected="true">
          <svg width="12" height="14" viewBox="0 0 12 14" aria-hidden="true">
            <path d="M1 1h8l2 2v10H1z" fill="#d8ecfb" stroke="#7b9cb8" />
            <path d="M5 3h2v2H5zM4 6h3v4h1v1H4v-1h1V7H4z" fill="#1273d6" />
          </svg>
          信息
        </Tab>
        <Tab role="tab" aria-selected="false">
          <svg width="13" height="14" viewBox="0 0 13 14" aria-hidden="true">
            <path d="M1 1h8l3 2v10H1z" fill="#f3f3fa" stroke="#8a92ac" />
            <path d="M7 3c-2-1-2 1-3 4s-1 4-3 4M2 6h5M7 7l4 4M11 7l-4 4" fill="none" stroke="#c21a1a" strokeWidth="1.4" />
          </svg>
          函数
        </Tab>
        <TabTools>
          <TabTool aria-label="刷新">
            <svg width="16" height="16" viewBox="0 0 16 16" fill="none" stroke="#0c0c0c" strokeWidth="2.2">
              <path d="M2 8c0-6 7-7 10-4M14 8c0 6-7 7-10 4" />
              <path d="M14 1v5H9zM2 15v-5h5z" fill="#0c0c0c" stroke="none" />
            </svg>
          </TabTool>
          <TabTool aria-label="切换公式视图">
            <svg width="16" height="14" viewBox="0 0 16 14" fill="none" stroke="#b01c1c" strokeWidth="1.5">
              <path d="M0 6h4M0 8h4M11 2c-3-1-3 1-4 5s-1 5-3 5M6 5h5M10 6l5 5M15 6l-5 5" />
            </svg>
          </TabTool>
        </TabTools>
      </TabStrip>
      <Hint>
        <svg width="36" height="38" viewBox="0 0 36 38" aria-hidden="true">
          <path d="M5 12l16-8 11 14-2 8-14 8-7-10z" fill="#fff" stroke="#111" strokeWidth="2" strokeLinejoin="round" />
          <path d="M8 14l13-7 8 11-14 7z" fill="#e9e9e9" stroke="#111" />
          <path d="M15 25l1 9M16 25l14-7" stroke="#111" strokeWidth="2" />
          <path d="M2 9L20 1l13 16-2 9-17 10L4 17zM2 9l12 18 19-10M14 27v9" fill="none" stroke="#1d6fe0" strokeWidth="1.4" />
          <g fill="#1d6fe0">
            {[[2, 9], [20, 2], [33, 17], [31, 26], [14, 35], [4, 17], [14, 27]].map(([x, y]) => (
              <rect key={`${x}-${y}`} x={x - 1.5} y={y - 1.5} width="3" height="3" />
            ))}
          </g>
        </svg>
        <HintText>
          添加下面的属性创建您的组件选项。要了解
          <br />
          相关辅导手册，请查看我们的<HintLink href="#guide">入门指南</HintLink>。
        </HintText>
      </Hint>
      <Scroller>
        <ScrollContent>
          <AttributeFrame>
            <AttributeTable>
              <colgroup>
                <col width="19" />
                <col width="103" />
                <col />
              </colgroup>
              <tbody>
                <tr>
                  <ToggleCell>
                    <PlainButton aria-label="折叠">
                      <svg width="9" height="9" viewBox="0 0 9 9">
                        <path d="M.5.5h8v8h-8z" fill="#fff" stroke="#999" />
                        <path d="M2 4.5h5" stroke="#222" />
                      </svg>
                    </PlainButton>
                  </ToggleCell>
                  <NameCell colSpan={2} scope="colgroup">
                    <NameLine>
                      组件#1
                      <svg width="37" height="16" viewBox="0 0 37 16">
                        <defs>
                          <linearGradient id="ruler" x1="0" x2="1">
                            <stop offset="0" stopColor="#fff" />
                            <stop offset=".5" stopColor="#fbf9c4" />
                            <stop offset="1" stopColor="#f2efb0" />
                          </linearGradient>
                          <linearGradient id="rule-edge" gradientUnits="userSpaceOnUse" x1="0" y1="0" x2="36" y2="0">
                            <stop offset="0" stopColor="#55533f" stopOpacity="0" />
                            <stop offset=".6" stopColor="#55533f" />
                          </linearGradient>
                        </defs>
                        <path d="M0 0h36v15H0z" fill="url(#ruler)" />
                        <path d="M0 .5h35.500v15H0" fill="none" stroke="url(#rule-edge)" />
                        <path
                          d="M5 15v-3M8 15v-3M11 15v-3M14 15v-4M17 15v-3M20 15v-3M23 15v-3M26 15v-4M29 15v-3M32 15v-3"
                          stroke="url(#rule-edge)"
                        />
                        <text x="19" y="9" fontFamily="Liberation Sans, sans-serif" fontSize="9" fontWeight="400" fill="#111">
                          cm
                        </text>
                      </svg>
                    </NameLine>
                  </NameCell>
                </tr>
                <tr>
                  <GutterCell rowSpan={3}>
                    <PlainButton aria-label="添加">
                      <svg width="13" height="17" viewBox="0 0 13 17">
                        <circle cx="6.5" cy="6.5" r="5.5" fill="#fff" stroke="#222" />
                        <path d="M3.500 6.500h6M6.500 3.500v6" stroke="#111" strokeWidth="2" />
                      </svg>
                    </PlainButton>
                  </GutterCell>
                  <SectionCell as="th" colSpan={2} $tint="#e6e6e6">
                    行为
                  </SectionCell>
                </tr>
                <tr>
                  <Cell>Material</Cell>
                  <Cell $line>
                    <ValueLine>
                      red
                      <PlainButton aria-label="详细信息">
                        <svg width="9" height="11" viewBox="0 0 9 11">
                          <path d="M.5.5h8v10h-8z" fill="#fff" stroke="#12233a" />
                          <path d="M1 1h7v2H1z" fill="#2c6cb8" />
                          <path d="M2 5.500h5M2 7.500h5" stroke="#12233a" />
                        </svg>
                      </PlainButton>
                    </ValueLine>
                  </Cell>
                </tr>
                <tr>
                  <Cell $tint="#fafaf6">
                    <AddButton>添加属性</AddButton>
                  </Cell>
                  <Cell $line $tint="#fafaf6" />
                </tr>
              </tbody>
            </AttributeTable>
          </AttributeFrame>
        </ScrollContent>
        <ScrollTrack>
          <svg width="7" height="4" viewBox="0 0 7 4">
            <path d="M0 4l3.500-4L7 4z" fill="#8a8a8a" />
          </svg>
          <svg width="7" height="4" viewBox="0 0 7 4">
            <path d="M0 0l3.500 4L7 0z" fill="#8a8a8a" />
          </svg>
        </ScrollTrack>
      </Scroller>
      <AttributesFooter />
    </DialogBody>
  </Dialog>
);

const StatusIcon = ({ children }: { children: React.ReactNode }) => (
  <svg width="14" height="14" viewBox="0 0 14 14" fill="#8c8c8c" aria-hidden="true">
    <circle cx="7" cy="7" r="6.3" fill="#f3f3f3" stroke="#9a9a9a" />
    {children}
  </svg>
);

export default function App() {
  return (
    <>
      <GlobalStyle />
      <AppWindow>
        <TitleBar>
          <Logo />
          <TitleText>无标题 - SketchUp Pro 2018</TitleText>
          <GlassSmudge />
          <WindowButtons />
        </TitleBar>
        <Client>
          <MenuBar>
            {menus.map((m) => (
              <MenuItem key={m}>{m}</MenuItem>
            ))}
          </MenuBar>
          <ToolBar>
            <ToolGroup>
              <Grip />
              {["iso", "top", "front", "right", "back", "left"].map((n) => (
                <Tool key={n} name={n} />
              ))}
            </ToolGroup>
            <ToolGroup $end={4}>
              <Grip />
              <LayerBox>
                <svg width="22" height="16" viewBox="0 0 22 16" aria-hidden="true">
                  <path d="M8 4v8l2-2 1 3h1l-1-3h2z" fill="#111" />
                </svg>
                <LayerSelect aria-label="图层" defaultValue="Layer0">
                  <option>Layer0</option>
                </LayerSelect>
                <DropArrow>
                  <svg width="7" height="4" viewBox="0 0 7 4">
                    <path d="M0 0h7L3.500 4z" fill="#000" />
                  </svg>
                </DropArrow>
              </LayerBox>
            </ToolGroup>
            <ToolGroup>
              <Grip />
              <Tool name="contours" />
              <Tool name="scratch" />
              <Divider />
              {["smoove", "stamp", "drape", "detail", "flip"].map((n) => (
                <Tool key={n} name={n} />
              ))}
            </ToolGroup>
            <ToolGroup>
              <Grip />
              <Tool name="xray" pressed />
              <Tool name="backedges" />
              <Divider />
              <Tool name="wire" />
              <Tool name="hidden" />
              <Tool name="shaded" />
              <Tool name="textured" pressed />
            </ToolGroup>
            {["section", "hand", "solids", "halfbox"].map((n) => (
              <ToolGroup key={n}>
                <Grip />
                <Tool name={n} compact />
              </ToolGroup>
            ))}
          </ToolBar>
          <Workspace>
            <ToolPalette>
              <Grip as="div" $flat />
              {palette.map((names, i) => (
                <React.Fragment key={names[0]}>
                  {i > 0 && <Divider as="div" $flat />}
                  <PaletteSection>
                    {names.map((n) => (
                      <Tool key={n} name={n} pressed={n === "arrow"} />
                    ))}
                  </PaletteSection>
                </React.Fragment>
              ))}
            </ToolPalette>
            <Viewport>
              <Model />
              <OptionsDialog />
              <AttributesDialog />
            </Viewport>
          </Workspace>
          <ValueRow>
            <ValueBox>
              <Grip />
              <ValueLabel>数值</ValueLabel>
              <ValueInput />
            </ValueBox>
          </ValueRow>
          <StatusBar>
            <StatusIcon>
              <path d="M7 2a3 3 0 0 1 2 5L8 11H6L5 7a3 3 0 0 1 2-5z" />
            </StatusIcon>
            <StatusIcon>
              <path d="M6 2h2v2H6zM5 5h4v3H8v4H6V8H5z" />
            </StatusIcon>
            <StatusIcon>
              <path d="M7 2a3 3 0 0 1 1 5c3 0 4 2 4 4-3 2-7 2-10 0 0-2 1-4 4-4a3 3 0 0 1 1-5z" />
            </StatusIcon>
            <StatusTick />
            <StatusText>选择对象。切换到扩充选择。拖动鼠标选择多项。</StatusText>
          </StatusBar>
        </Client>
        <Watermark width="190" height="96" viewBox="0 0 190 96">
          <g fill="#fff" fillOpacity=".75" stroke="#c4c4c1" strokeOpacity=".7" paintOrder="stroke" strokeWidth="2">
            <text x="3" y="57" fontFamily="Liberation Sans, sans-serif" fontWeight="700" fontSize="38">
              Bai
            </text>
            <ellipse cx="72" cy="24" rx="6.5" ry="8.5" />
            <ellipse cx="85" cy="12" rx="6" ry="9" />
            <ellipse cx="101" cy="13" rx="6" ry="9" />
            <ellipse cx="111" cy="28" rx="6.5" ry="8.5" />
            <path d="M69 50c2-8 11-12 14-19 3-7 14-7 18 0 3 7 10 10 12 18 1 8-6 11-12 9-6-1-13-1-19 0-7 1-14-1-13-8z" />
            <text x="78" y="54" fontFamily="Liberation Sans, sans-serif" fontWeight="700" fontSize="22" strokeOpacity="1">
              du
            </text>
            <text x="119" y="55" fontFamily="Noto Sans CJK SC, sans-serif" fontWeight="700" fontSize="31">
              经验
            </text>
            <text x="7" y="82" fontFamily="Open Sans, sans-serif" fontSize="20" strokeWidth="1">
              jingyan.baidu.com
            </text>
          </g>
        </Watermark>
        <ResizeCorner width="9" height="9" viewBox="0 0 9 9" aria-hidden="true">
          <path d="M6 0h2v2H6zM3 3h2v2H3zM6 3h2v2H6zM0 6h2v2H0zM3 6h2v2H3zM6 6h2v2H6z" fill="#bcbcbc" />
        </ResizeCorner>
      </AppWindow>
    </>
  );
}
